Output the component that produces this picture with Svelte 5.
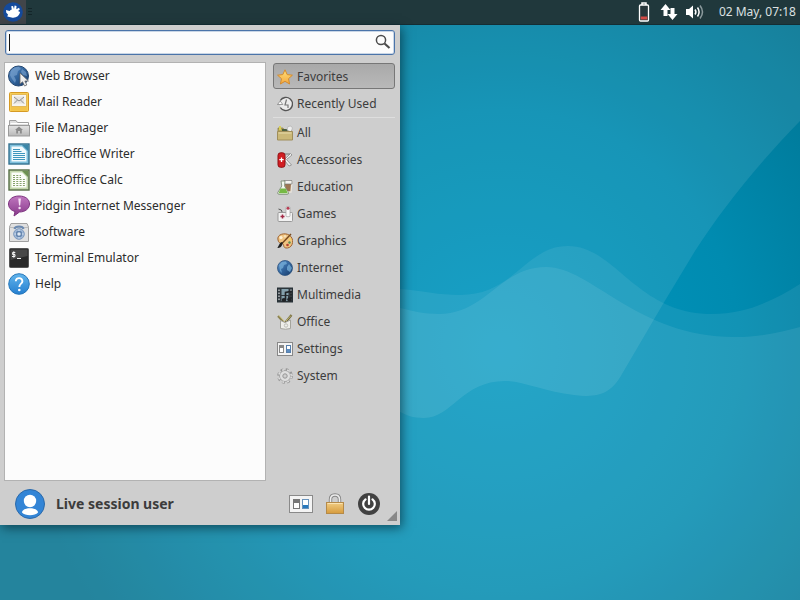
<script lang="ts">
  type Entry = { label: string; icon: string }

  const apps: Entry[] = [
    { label: 'Web Browser', icon: 'browser' },
    { label: 'Mail Reader', icon: 'mail' },
    { label: 'File Manager', icon: 'files' },
    { label: 'LibreOffice Writer', icon: 'writer' },
    { label: 'LibreOffice Calc', icon: 'calc' },
    { label: 'Pidgin Internet Messenger', icon: 'pidgin' },
    { label: 'Software', icon: 'software' },
    { label: 'Terminal Emulator', icon: 'terminal' },
    { label: 'Help', icon: 'help' },
  ]

  const recent: Entry[] = [
    { label: 'Favorites', icon: 'star' },
    { label: 'Recently Used', icon: 'clock' },
  ]

  const categories: Entry[] = [
    { label: 'All', icon: 'all' },
    { label: 'Accessories', icon: 'accessories' },
    { label: 'Education', icon: 'education' },
    { label: 'Games', icon: 'games' },
    { label: 'Graphics', icon: 'graphics' },
    { label: 'Internet', icon: 'internet' },
    { label: 'Multimedia', icon: 'multimedia' },
    { label: 'Office', icon: 'office' },
    { label: 'Settings', icon: 'settings' },
    { label: 'System', icon: 'system' },
  ]

  let query = $state('')
  let active = $state('Favorites')

  let shown = $derived(apps.filter(a => a.label.toLowerCase().includes(query.toLowerCase())))
</script>

{#snippet appIcon(name: string)}
  <svg class="app-icon" viewBox="0 0 22 22" aria-hidden="true">
    {#if name === 'browser'}
      <circle cx="10.5" cy="11" r="10" fill="url(#globe)" stroke="#24466f" />
      <path d="M3 6 Q6 1.500 11 2 L13 4 L10 6 L9 10 L6 11 L8 15 L7 18 L4 14 L2 10Z M14 4 L18 7 L19 11 L15 10 L13 7Z" fill="#7fa6d2" opacity=".6" />
      <path d="M12 8 V19 L14.600 16.800 L16.500 21 L18.800 20 L16.900 16 H20.500Z" fill="#eee" stroke="#666" stroke-width=".8" />
    {:else if name === 'mail'}
      <rect x="1.500" y="1.500" width="19" height="19" rx="1" fill="#f7cd55" stroke="#d69a24" />
      <rect x="3.500" y="3.500" width="15" height="12" fill="#f6f4ee" stroke="#e2b95a" />
      <path d="M6 5.500 H16 V12.500 H6Z" fill="#e6e4df" />
      <path d="M6 6 L11 10 L16 6 M6 12.500 L9.500 9 M16 12.500 L12.500 9" fill="none" stroke="#8f8f8f" />
      <path d="M3 16 H19 V19.500 H3Z" fill="#f3c348" />
    {:else if name === 'files'}
      <path d="M1.500 18.500 V3.500 H8 L9.500 5.500 H20.500 V18.500Z" fill="#dedede" stroke="#a0a0a0" />
      <path d="M2.500 6.500 H20" stroke="#fff" />
      <rect x=".500" y="8.500" width="21" height="10.500" fill="url(#silver)" stroke="#9b9b9b" />
      <path d="M11 9.500 L7 13 H8.200 V16.500 H10 V14 H12 V16.500 H13.800 V13 H15Z" fill="#8b8b8b" />
    {:else if name === 'writer'}
      <rect x="1" y="1" width="20" height="20" fill="#7fc0dc" stroke="#33718f" stroke-width="1.400" />
      <path d="M3.500 3.500 H14 L18.500 8 V18.500 H3.500Z" fill="#f2fafd" />
      <path d="M14 2 H20 V8Z" fill="#3a86a8" />
      <path d="M5 6.500 H12 M5 8.500 H13.500 M5 10.500 H17 M5 12.500 H17 M5 14.500 H17 M5 16.500 H17" stroke="#3f97bd" />
    {:else if name === 'calc'}
      <rect x="1" y="1" width="20" height="20" fill="#c3d6ac" stroke="#566d46" stroke-width="1.400" />
      <path d="M3.500 3.500 H14 L18.500 8 V18.500 H3.500Z" fill="#fcfdf9" />
      <path d="M14 2 H20 V8Z" fill="#6e9152" />
      <path d="M5 6.500 H13 M5 8.500 H13 M5 10.500 H17 M5 12.500 H17 M5 14.500 H17 M5 16.500 H17" stroke="#86a26c" stroke-dasharray="2 1.300" />
    {:else if name === 'pidgin'}
      <path d="M11 1 C17.500 1 21.500 4.300 21.500 9 C21.500 13.700 17 17 11.500 17 L6 21 L7 16.500 C3 15.500 .500 12.600 .500 9 C.500 4.300 5 1 11 1Z" fill="url(#plum)" stroke="#7d347f" />
      <path d="M10.300 3.500 H12.900 L12.200 10.500 H11Z" fill="#f6dff5" />
      <circle cx="11.600" cy="13" r="1.200" fill="#f6dff5" />
    {:else if name === 'software'}
      <path d="M3 2.500 H19 L20.500 6 V20.500 H1.500 V6Z" fill="#e0e0e0" stroke="#a0a0a0" />
      <path d="M1.500 6.500 H20.500" stroke="#bcbcbc" />
      <circle cx="11" cy="13" r="5.300" fill="#9fb8d8" stroke="#7d99bd" />
      <circle cx="11" cy="13" r="2.500" fill="#dfe8f2" stroke="#6585ae" stroke-width="1.500" />
      <path d="M6.500 8 Q7 5.500 11 5.500 Q15 5.500 15.500 8" fill="none" stroke="#6c8ab0" stroke-width="2" />
      <path d="M11 8.500 V10 M11 16 V17.500 M6.500 13 H8 M14 13 H15.500" stroke="#dfe8f2" />
    {:else if name === 'terminal'}
      <rect x="1.500" y="1.500" width="19" height="19" rx="1" fill="#292929" stroke="#555" />
      <path d="M2.500 2.500 H19.500 V9 L2.500 13Z" fill="#474747" />
      <path d="M7.300 5.500 H4.600 V7.500 H7 V9.500 H4 M5.800 4.300 V10.700 M9 11.500 H13" fill="none" stroke="#f4f4f4" />
    {:else if name === 'help'}
      <circle cx="11" cy="11" r="10.300" fill="url(#sky)" stroke="#2677ba" />
      <path d="M7.800 8.300 C7.800 3.800 14.600 4.200 14.400 8.400 C14.300 10.700 11.300 10.800 11.300 14" fill="none" stroke="#fff" stroke-width="1.900" />
      <circle cx="11.300" cy="17" r="1.300" fill="#fff" />
    {/if}
  </svg>
{/snippet}

{#snippet categoryIcon(name: string)}
  <svg class="category-icon" viewBox="0 0 16 16" aria-hidden="true">
    {#if name === 'star'}
      <path d="M8 .800 L10.200 5.600 L15.400 6.200 L11.500 9.700 L12.600 15 L8 12.300 L3.400 15 L4.500 9.700 L.600 6.200 L5.800 5.600Z" fill="url(#gold)" stroke="#d58b2c" stroke-linejoin="round" />
    {:else if name === 'clock'}
      <path d="M3.300 4.500 A6.600 6.600 0 1 1 3.300 11.500" fill="#ececec" stroke="#555" stroke-width="1.400" />
      <path d="M.500 8.500 L3.200 5 L5.800 8.500Z" fill="#fff" stroke="#777" stroke-width=".7" />
      <path d="M9.500 3.500 L8 9 H11 V12" fill="none" stroke="#777" stroke-width="1.200" />
    {:else if name === 'all'}
      <path d="M1 7 V3 H6 L7 5 H14.500 V8Z" fill="#b8a658" stroke="#87783e" stroke-width=".7" />
      <path d="M2 1 H4 V5 H2Z" fill="#d7cf58" />
      <path d="M5 4 H11 V7 H5Z" fill="#4c6040" />
      <path d="M10 5 L11 1.500 L14 1 L15.500 3 L14 7Z" fill="#eee" stroke="#aaa" stroke-width=".6" />
      <path d="M.500 6.500 H15.500 V15 H.500Z" fill="#cbb878" stroke="#a08e5a" />
      <path d="M1.500 8 H14.500" stroke="#e7dbab" />
    {:else if name === 'accessories'}
      <path d="M8 7 L13.500 1.500 L15 3 L9.500 7.500 L14.500 13 L12 14 L8 9" fill="#f1f1f1" stroke="#888" stroke-width=".8" />
      <path d="M8 2 H13" stroke="#888" stroke-width="1.200" />
      <rect x="1" y=".800" width="7" height="14.500" rx="2.500" fill="#d21d22" stroke="#8e1115" />
      <path d="M4.500 5.500 V10 M2.300 7.700 H6.700" stroke="#fff" stroke-width="1.300" />
    {:else if name === 'education'}
      <path d="M7 2 H15 L14 13 H8Z" fill="#9d7550" stroke="#e9e5dd" stroke-width="1.400" />
      <path d="M6.500 1.500 H15 V5 H7" fill="#f3f3ee" stroke="#777" stroke-width=".7" />
      <path d="M4 2 H8 L7.500 7 L11.500 13.500 Q12 15.300 10 15.300 H2 Q.200 15 .800 13.500 L4.800 7Z" fill="#f2f7ee" stroke="#72836b" stroke-width=".8" />
      <path d="M3.500 9.500 H8.700 L10.800 14.300 H1.600Z" fill="#76b944" />
    {:else if name === 'games'}
      <path d="M1.500 3 Q5 3 5.500 7" fill="none" stroke="#555" />
      <rect x="1" y="6.500" width="14.500" height="9" rx="1" fill="#f2f2f2" stroke="#999" />
      <rect x="9" y=".700" width="4" height="10" rx="1" fill="#fafafa" stroke="#aaa" stroke-width=".8" />
      <circle cx="11" cy="2.200" r="1.500" fill="#b73b51" />
      <path d="M5.500 8.500 V12.500 M3.500 10.500 H7.500" stroke="#a22945" stroke-width="1.500" />
    {:else if name === 'graphics'}
      <path d="M1 7 C-.500 1 8 -.500 12 2 C18 5.500 16 14.500 10.500 15 C5 15.500 8 11 5 10.500 C3 10 1.700 10 1 7Z" fill="#f0c380" stroke="#9b6232" />
      <circle cx="4" cy="4.500" r="1.600" fill="#fff2d5" /><circle cx="8" cy="3.300" r="1.200" fill="#f5e1b9" />
      <circle cx="13" cy="6.500" r="1.200" fill="#f3d35f" /><circle cx="12.500" cy="9.500" r="1.200" fill="#5b8c53" /><circle cx="10.500" cy="12" r="1.300" fill="#b34131" />
      <path d="M14 1 L5 10.500" stroke="#76491d" stroke-width="1.400" />
      <path d="M5.800 9.500 C5 14 3 15 .300 15 C2 13 2 10 5 9Z" fill="#222" />
    {:else if name === 'internet'}
      <circle cx="8" cy="8" r="7.500" fill="url(#globe)" stroke="#2c537f" stroke-width=".8" />
      <path d="M2 5 L5 2 L9 1.500 L10 4 L7 5 L6 8 L4 9 L5 13 L3 11Z M12 4 L15 8 L13 12 L10 10 L10 7Z" fill="#75afd8" opacity=".75" />
    {:else if name === 'multimedia'}
      <rect x=".500" y="1" width="15" height="14" fill="#31383d" stroke="#263036" />
      <path d="M4.500 2 H11.500 V8 H4.500Z M4.500 9 H11 V14 H4.500Z" fill="#84a0ac" />
      <path d="M2 2.500 V14 M14 2.500 V14" stroke="#c7cdd0" stroke-width="1.300" stroke-dasharray="1.500 1.500" />
      <path d="M8.500 13 V5.500 L14 4.500 V12" fill="none" stroke="#202326" stroke-width="1.600" />
      <ellipse cx="7" cy="13" rx="2.300" ry="1.900" fill="#202326" /><ellipse cx="12.500" cy="12.500" rx="2.300" ry="1.900" fill="#202326" />
    {:else if name === 'office'}
      <path d="M1 2 L7.500 9" stroke="#8c8250" stroke-width="2.200" /><path d="M14.500 1 L8 9" stroke="#70673c" stroke-width="2.200" />
      <path d="M2 1.500 L8 8 M14 1.500 L9 7" stroke="#d8cf83" stroke-width=".8" />
      <path d="M3.500 6.500 L8 8.500 L13.500 6 V14.500 Q8.500 16 3.500 14.500Z" fill="#eeeee9" stroke="#a4a49d" />
      <circle cx="9" cy="11.500" r="1.700" fill="none" stroke="#bcbdb6" />
    {:else if name === 'settings'}
      <rect x=".500" y="1.500" width="15" height="13" fill="#f3f3f3" stroke="#888" />
      <rect x="2.500" y="4.500" width="4" height="7" fill="#fff" stroke="#888" /><path d="M3 5 H6 V7 H3Z" fill="#888" />
      <rect x="9.500" y="4.500" width="4" height="7" fill="#fff" stroke="#587fab" /><path d="M10 8 H13 V11 H10Z" fill="#5b8cc0" />
    {:else if name === 'system'}
      <circle cx="8" cy="8" r="6.500" fill="none" stroke="#969696" stroke-width="2.600" stroke-dasharray="2.700 2.400" />
      <circle cx="8" cy="8" r="5.500" fill="#dfdfdf" stroke="#999" stroke-width=".8" />
      <circle cx="8" cy="8" r="6.300" fill="none" stroke="#dfdfdf" stroke-width="1.600" stroke-dasharray="1.700 3.400" stroke-dashoffset="-.5" />
      <circle cx="8" cy="8" r="2.200" fill="#cfcfcf" stroke="#969696" />
    {/if}
  </svg>
{/snippet}

{#snippet category(item: Entry)}
  <button class="category" class:on={active === item.label} aria-pressed={active === item.label} onclick={() => (active = item.label)}>
    {@render categoryIcon(item.icon)}
    <span>{item.label}</span>
  </button>
{/snippet}

<div class="desktop">
  <svg class="wallpaper" viewBox="0 0 800 600" preserveAspectRatio="none" aria-hidden="true">
    <defs>
      <radialGradient id="sea" gradientUnits="userSpaceOnUse" cx="500" cy="350" r="480">
        <stop offset="0" stop-color="#0098c1" />
        <stop offset=".5" stop-color="#008bb0" />
        <stop offset="1" stop-color="#00708d" />
      </radialGradient>
      <linearGradient id="globe" x2="1" y2="1"><stop stop-color="#6292c9" /><stop offset=".5" stop-color="#31649d" /><stop offset="1" stop-color="#173966" /></linearGradient>
      <linearGradient id="silver" x2="0" y2="1"><stop stop-color="#e4e4e4" /><stop offset="1" stop-color="#b8b8b8" /></linearGradient>
      <linearGradient id="plum" x2="0" y2="1"><stop stop-color="#c077bf" /><stop offset="1" stop-color="#87388a" /></linearGradient>
      <linearGradient id="sky" x2="0" y2="1"><stop stop-color="#62b5ec" /><stop offset="1" stop-color="#257fd0" /></linearGradient>
      <linearGradient id="gold" x2="0" y2="1"><stop stop-color="#ffe07b" /><stop offset="1" stop-color="#f5a83d" /></linearGradient>
      <linearGradient id="brass" x2="0" y2="1"><stop stop-color="#f2cd83" /><stop offset="1" stop-color="#d69b3c" /></linearGradient>
    </defs>
    <rect width="800" height="600" fill="url(#sea)" />
    <path d="M0 0 H800 V121 C758 164 722 209 695 251 L663 304 L622 374 C611 394 598 398 574 395 C545 392 523 381 505 381 C462 381 452 418 424 418 C412 418 407 415 400 412 L0 330Z" fill="#fff" fill-opacity=".09" />
    <path d="M0 289 H400 C425 291 438 295 460 295 C515 295 525 246 568 246 C616 246 636 314 712 314 C748 314 776 299 800 284 V600 H0Z" fill="#fff" fill-opacity=".07" />
    <path d="M0 308 H400 C413 311 424 314 439 314 C486 314 500 267 546 267 C592 267 636 337 735 337 C762 337 782 332 800 327 V600 H0Z" fill="#fff" fill-opacity=".08" />
  </svg>

  <header class="panel">
    <button class="launcher" aria-label="Applications menu">
      <svg viewBox="0 0 20 20" aria-hidden="true">
        <circle cx="10" cy="10" r="9.800" fill="#154a9c" />
        <path d="M3.300 10.800 L3 8 L6.600 9 C7.100 8.200 8 7.700 8.800 7.600 L8.200 4.200 L10 4 L11 7 L11.600 3.600 L13.500 4 L13.300 7.300 L16 5.700 L16.800 7.500 L15 9 L17 10 C16.500 14 12.500 16.500 8.500 15.500 L4.300 14.500 L5 12.500Z" fill="#fff" />
      </svg>
    </button>
    <span class="handle"></span>
    <div class="tray">
      <button aria-label="Battery">
        <svg width="12" height="20" viewBox="0 0 12 20" aria-hidden="true">
          <path d="M4 3 V1 H8 V3" fill="none" stroke="#fff" stroke-width="1.500" />
          <rect x="1.500" y="3" width="9" height="16" rx="1" fill="#27383c" stroke="#fff" stroke-width="1.300" />
          <path d="M2.700 14.500 H9.300 V17.500 H2.700Z" fill="#d34a45" />
        </svg>
      </button>
      <button aria-label="Network">
        <svg width="18" height="18" viewBox="0 0 18 18" aria-hidden="true">
          <path d="M5.500 1 L10.500 7 H7.500 V13 H3.500 V7 H.500Z M12.500 17 L7.500 11 H10.500 V5 H14.500 V11 H17.500Z" fill="#fff" />
        </svg>
      </button>
      <button aria-label="Volume">
        <svg width="20" height="16" viewBox="0 0 20 16" aria-hidden="true">
          <path d="M1 5 H4 L8 1.500 V14.500 L4 11 H1Z" fill="#fff" />
          <path d="M10 5.500 Q11.800 8 10 10.500 M12.500 3.500 Q15.700 8 12.500 12.500" fill="none" stroke="#fff" stroke-width="1.500" />
          <path d="M15 1.500 Q20 8 15 14.500" fill="none" stroke="#8b999c" stroke-width="1.500" />
        </svg>
      </button>
    </div>
    <time class="date">02 May, 07:18</time>
  </header>

  <main class="menu">
    <div class="search">
      <input type="text" aria-label="Search applications" bind:value={query} />
      {#if !query}<span class="caret"></span>{/if}
      <svg viewBox="0 0 16 16" aria-hidden="true">
        <circle cx="6" cy="6" r="4.600" fill="none" stroke="#4c4c4c" stroke-width="1.500" />
        <path d="M9.500 9.500 L14.500 14" stroke="#4c4c4c" stroke-width="2.200" />
      </svg>
    </div>

    <div class="content">
      <ul class="apps">
        {#each shown as app}
          <li>
            <button class="app">
              {@render appIcon(app.icon)}
              <span>{app.label}</span>
            </button>
          </li>
        {/each}
      </ul>

      <nav class="categories" aria-label="Categories">
        {#each recent as item}
          {@render category(item)}
        {/each}
        <hr />
        {#each categories as item}
          {@render category(item)}
        {/each}
      </nav>
    </div>

    <footer>
      <svg class="avatar" viewBox="0 0 30 30" aria-hidden="true">
        <circle cx="15" cy="15" r="14.500" fill="#3385d6" stroke="#2b6aab" />
        <circle cx="15" cy="12" r="6.200" fill="#fff" />
        <path d="M7 23.500 C7 17.800 23 17.800 23 23.500 C20 27 10 27 7 23.500Z" fill="#fff" />
      </svg>
      <strong>Live session user</strong>
      <div class="actions">
        <button aria-label="All settings">
          <svg viewBox="0 0 24 24" aria-hidden="true">
            <rect x=".500" y="3.500" width="23" height="17" fill="#f4f4f4" stroke="#8a8a8a" />
            <rect x="4.500" y="7.500" width="6" height="9" fill="#fff" stroke="#777" /><path d="M5 8 H10 V11 H5Z" fill="#777" />
            <rect x="13.500" y="7.500" width="6" height="9" fill="#fff" stroke="#6993bc" /><path d="M14 13 H19 V16 H14Z" fill="#2878bc" />
          </svg>
        </button>
        <button aria-label="Lock screen">
          <svg viewBox="0 0 24 24" aria-hidden="true">
            <path d="M7.500 12 V7.500 Q7.500 3 12 3 Q16.500 3 16.500 7.500 V12" fill="none" stroke="#858585" stroke-width="3.400" />
            <path d="M7.500 12 V7.500 Q7.500 3 12 3 Q16.500 3 16.500 7.500 V12" fill="none" stroke="#ededed" stroke-width="1.600" />
            <rect x="3.500" y="10.500" width="17" height="11" fill="url(#brass)" stroke="#b58a48" />
            <path d="M4.500 11.500 H19.500" stroke="#fae3b2" />
          </svg>
        </button>
        <button aria-label="Log out">
          <svg viewBox="0 0 24 24" aria-hidden="true">
            <circle cx="12" cy="12" r="11" fill="#414141" />
            <path d="M8.500 7.300 A5.800 5.800 0 1 0 15.500 7.300 M12 4.500 V12" fill="none" stroke="#fff" stroke-width="2.200" stroke-linecap="round" />
          </svg>
        </button>
      </div>
    </footer>
    <svg class="grip" viewBox="0 0 10 10" aria-hidden="true"><path d="M10 0 V10 H0Z" fill="#888" /></svg>
  </main>
</div>

<style>
  :global(body) { margin: 0; }
  .desktop {
    position: relative;
    display: flex;
    flex-direction: column;
    min-height: 100vh;
    font: 12px/16px "Noto Sans", "Open Sans", sans-serif;
    color: #3c3c3c;
  }
  .wallpaper {
    position: absolute;
    inset: 0;
    width: 100%;
    height: 100%;
  }
  button {
    display: flex;
    align-items: center;
    margin: 0;
    padding: 0;
    border: 0;
    background: none;
    color: inherit;
    font: inherit;
    text-align: left;
  }
  svg { display: block; flex: none; }

  .panel {
    position: relative;
    display: flex;
    align-items: center;
    height: 25px;
    box-sizing: border-box;
    padding-right: 4px;
    background: #20383c;
    border-bottom: 1px solid #152d33;
    color: #dce0e1;
  }
  .launcher {
    width: 26px;
    height: 24px;
    justify-content: center;
    background: #41454a;
  }
  .launcher svg { width: 20px; height: 20px; }
  .handle {
    width: 4px;
    height: 8px;
    margin-left: 2px;
    background: repeating-linear-gradient(#142529 0 1px, transparent 1px 3px);
  }
  .tray {
    display: flex;
    align-items: center;
    gap: 10px;
    margin-left: auto;
    padding-right: 14px;
  }
  .tray button:last-child { margin-left: -3px; }

  .menu {
    position: relative;
    flex: 1;
    display: flex;
    flex-direction: column;
    width: 50%;
    min-width: 400px;
    margin-bottom: 75px;
    box-sizing: border-box;
    padding: 5px 5px 0 4px;
    background: #cecece;
    box-shadow: 2px 3px 10px rgba(0, 30, 40, 0.6);
  }
  .search {
    position: relative;
    display: flex;
    margin-left: 1px;
  }
  .search input {
    flex: 1;
    min-width: 0;
    height: 25px;
    box-sizing: border-box;
    padding: 0 28px 0 4px;
    border: 1px solid #4b74a9;
    border-radius: 3px;
    outline: none;
    background: #fcfcfc;
    box-shadow: inset 0 0 0 1px #c9d6e6;
    font: inherit;
  }
  .caret {
    position: absolute;
    left: 4px;
    top: 4px;
    width: 1px;
    height: 17px;
    background: #111;
  }
  .search svg {
    position: absolute;
    right: 4px;
    top: 4px;
    width: 16px;
    height: 16px;
  }

  .content {
    flex: 1;
    display: flex;
    gap: 7px;
    margin-top: 7px;
  }
  .apps {
    flex: 1;
    margin: 0;
    padding: 0;
    list-style: none;
    background: #fcfcfc;
    border: 1px solid #b2b2b2;
    color: #2c2c2c;
  }
  .app {
    width: 100%;
    height: 26px;
    gap: 5px;
    padding-left: 3px;
  }
  .app-icon { width: 22px; height: 22px; }
  .categories {
    display: flex;
    flex-direction: column;
    gap: 1px;
    width: 122px;
    padding-top: 1px;
  }
  .category {
    height: 26px;
    gap: 4px;
    padding: 1px 3px 0;
    border: 1px solid transparent;
    border-radius: 3px;
  }
  .category.on {
    border-color: #777;
    background: linear-gradient(#a9a9a9, #b9b9b9);
  }
  .category-icon { width: 16px; height: 16px; }
  hr {
    width: 100%;
    height: 1px;
    margin: 0;
    border: 0;
    background: #dedede;
  }

  footer {
    display: flex;
    align-items: center;
    height: 42px;
    padding: 2px 14px 0 11px;
  }
  .avatar { width: 30px; height: 30px; margin-right: 11px; }
  strong { font-size: 14px; line-height: 20px; }
  .actions {
    display: flex;
    gap: 10px;
    margin-left: auto;
  }
  .actions svg { width: 24px; height: 24px; }
  .grip {
    position: absolute;
    right: 3px;
    bottom: 4px;
    width: 10px;
    height: 10px;
  }
</style>
